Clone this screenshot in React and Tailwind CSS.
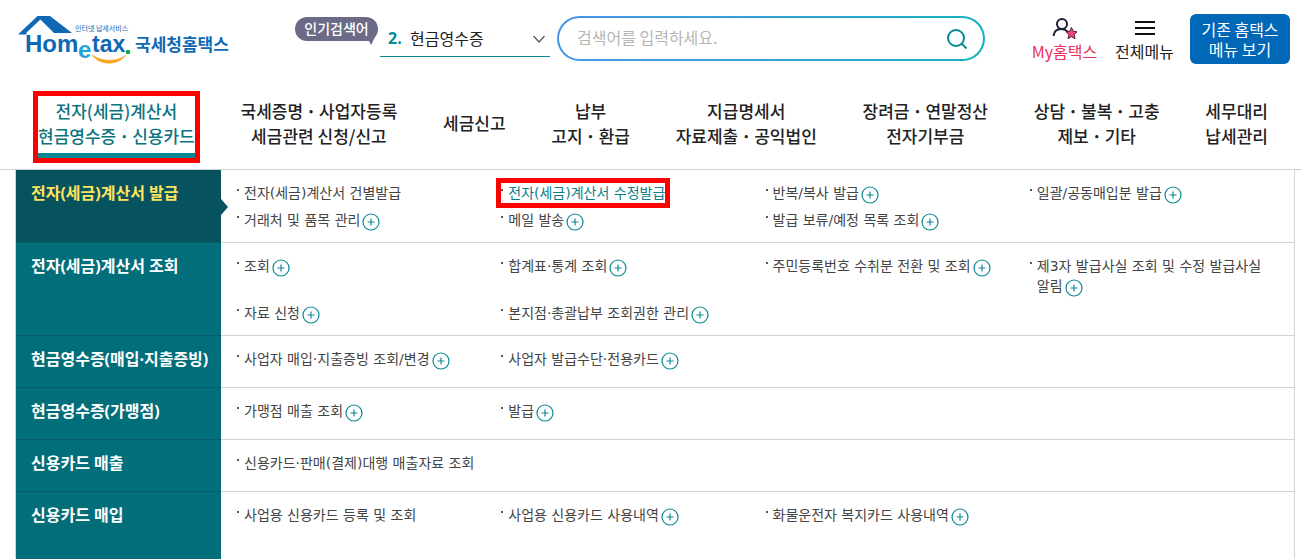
import { useState } from "react"

const topMenus = [
    ["전자(세금)계산서", "현금영수증・신용카드"],
    ["국세증명・사업자등록", "세금관련 신청/신고"],
    ["세금신고"],
    ["납부", "고지・환급"],
    ["지급명세서", "자료제출・공익법인"],
    ["장려금・연말정산", "전자기부금"],
    ["상담・불복・고충", "제보・기타"],
    ["세무대리", "납세관리"],
]

const sections = [
    {
        title: "전자(세금)계산서 발급",
        items: [
            { label: "전자(세금)계산서 건별발급" },
            { label: "전자(세금)계산서 수정발급", marked: true },
            { label: "반복/복사 발급", more: true },
            { label: "일괄/공동매입분 발급", more: true },
            { label: "거래처 및 품목 관리", more: true },
            { label: "메일 발송", more: true },
            { label: "발급 보류/예정 목록 조회", more: true },
        ],
    },
    {
        title: "전자(세금)계산서 조회",
        items: [
            { label: "조회", more: true },
            { label: "합계표·통계 조회", more: true },
            { label: "주민등록번호 수취분 전환 및 조회", more: true },
            { label: "제3자 발급사실 조회 및 수정 발급사실 알림", more: true },
            { label: "자료 신청", more: true },
            { label: "본지점·총괄납부 조회권한 관리", more: true },
        ],
    },
    {
        title: "현금영수증(매입·지출증빙)",
        items: [
            { label: "사업자 매입·지출증빙 조회/변경", more: true },
            { label: "사업자 발급수단·전용카드", more: true },
        ],
    },
    {
        title: "현금영수증(가맹점)",
        items: [
            { label: "가맹점 매출 조회", more: true },
            { label: "발급", more: true },
        ],
    },
    {
        title: "신용카드 매출",
        items: [{ label: "신용카드·판매(결제)대행 매출자료 조회" }],
    },
    {
        title: "신용카드 매입",
        items: [
            { label: "사업용 신용카드 등록 및 조회" },
            { label: "사업용 신용카드 사용내역", more: true },
            { label: "화물운전자 복지카드 사용내역", more: true },
        ],
    },
]

const Logo = () => (
    <svg width="212" height="52" viewBox="0 0 212 52" role="img" aria-label="Hometax 국세청홈택스">
        <path d="M0 20.5 L19.5 2 H32 L54 19 H36 L22.5 5.5 L8.5 18.5 V20.5 Z" fill="#0f68b4" />
        <g fontFamily="'Liberation Sans', Arial, sans-serif" fontWeight="700" fill="#0f68b4">
            <text x="7" y="38" fontSize="24">Hom</text>
            <text x="60" y="44" fontSize="24" fill="#1fa3dc">e</text>
            <text x="74" y="38" fontSize="23">tax</text>
        </g>
        <circle cx="110" cy="38" r="2.3" fill="#16a34a" />
        <path d="M74 41 C82 52 100 52 108 41 C100 48 84 48 74 41 Z" fill="#f5a623" stroke="#f5a623" strokeWidth="0.6" />
        <g fontFamily="'Noto Sans CJK KR', sans-serif" fill="#0f68b4">
            <text x="57" y="17" fontSize="7">인터넷 납세서비스</text>
            <text x="117" y="37" fontSize="17" fontWeight="700">국세청홈택스</text>
        </g>
    </svg>
)

const PlusIcon = () => (
    <svg className="inline-block ml-0.5 -my-1 align-[-2px]" width="18" height="18" viewBox="0 0 18 18" fill="none" stroke="#0b8a94" strokeWidth="1.2">
        <circle cx="9" cy="9" r="8" />
        <path d="M9 5.5 V12.5 M5.5 9 H12.5" />
    </svg>
)

const Header = () => {
    const [keyword, setKeyword] = useState("")

    return (
        <header className="flex items-start h-20 pl-[18px] pr-[11px] pt-3.5">
            <a href="#home" className="shrink-0 w-[210px]">
                <Logo />
            </a>

            <div className="relative shrink-0 ml-[67px] mt-[3px] w-[83px] h-6 rounded-full bg-[#6b6b88] text-white text-sm leading-[22px] font-medium text-center">
                인기검색어
                <svg className="absolute right-0 -bottom-1" width="12" height="14" viewBox="0 0 12 14">
                    <path d="M0 10 L12 0 L5 14 L3 10 Z" fill="#6b6b88" />
                </svg>
            </div>

            <div className="relative flex items-center shrink-0 ml-0.5 mt-1.5 w-[170px] h-[37px] pl-2 border-b border-[#078a93]">
                <label htmlFor="popular" className="w-[22px] font-bold text-[#078a93] font-['Noto_Sans']">2.</label>
                <select id="popular" className="flex-1 appearance-none bg-transparent text-[#222] outline-none">
                    <option>현금영수증</option>
                </select>
                <svg className="absolute right-[5px] top-[15px] pointer-events-none" width="12" height="8" viewBox="0 0 12 8" fill="none" stroke="#555" strokeWidth="1.2">
                    <path d="M0.5 1 L6 7 L11.5 1" />
                </svg>
            </div>

            <form onSubmit={(e) => e.preventDefault()} className="flex-1 ml-[7px] mt-0.5 p-0.5 rounded-full bg-linear-to-r from-[#4796ea] to-[#0eb0bb]">
                <div className="flex items-center h-[41px] pl-[18px] pr-4 rounded-full bg-white">
                    <input
                        type="text"
                        aria-label="검색어"
                        placeholder="검색어를 입력하세요."
                        value={keyword}
                        onChange={(e) => setKeyword(e.target.value)}
                        className="flex-1 min-w-0 pb-1 outline-none placeholder:text-[#b5b5b5]"
                    />
                    <button type="submit" aria-label="검색">
                        <svg width="20" height="20" viewBox="0 0 20 20" fill="none" stroke="#078a93" strokeWidth="2">
                            <circle cx="9" cy="9" r="8" />
                            <path d="M14.5 14.5 L19.5 19.5" />
                        </svg>
                    </button>
                </div>
            </form>

            <button className="flex flex-col items-center shrink-0 ml-[46px] mt-1 w-[67px] leading-5 whitespace-nowrap text-[#e8305a]">
                <svg width="26" height="23" viewBox="0 0 26 23" fill="none">
                    <circle cx="10" cy="6" r="5" stroke="#1b1b3a" strokeWidth="2" />
                    <path d="M1.5 18 C2 13.5 5 11 9 11 C12 11 14 12 15.5 13.5" stroke="#1b1b3a" strokeWidth="2" />
                    <path d="M19.5 9.5 L21.2 13.3 L25 13.8 L22.2 16.6 L23 20.7 L19.5 18.7 L16 20.7 L16.8 16.6 L14 13.8 L17.8 13.3 Z" fill="#f4476b" stroke="#4a2038" strokeWidth="1" />
                </svg>
                My홈택스
            </button>

            <button className="flex flex-col items-center shrink-0 ml-[17px] mt-1 w-[59px] leading-5 whitespace-nowrap text-[#222]">
                <svg width="20" height="23" viewBox="0 0 20 23" stroke="#111" strokeWidth="2">
                    <path d="M0 4 H20 M0 10 H20 M0 16 H20" />
                </svg>
                전체메뉴
            </button>

            <button className="shrink-0 ml-4 w-[100px] h-[50px] rounded-md bg-[#0068b7] text-white leading-5">
                기존 홈택스<br />메뉴 보기
            </button>
        </header>
    )
}

const TopNav = () => (
    <nav className="flex justify-between pt-4 pb-[11px] pl-[38px] pr-[33px] border-b border-[#cfcfcf] text-[17px] leading-[25px] font-medium">
        {topMenus.map((lines, i) => (
            <button
                key={lines[0]}
                className={`flex flex-col items-center justify-center h-[62px] pb-1 border-b-5 whitespace-nowrap ${i === 0 ? "border-[#078a93] text-[#0b7480] outline-5 outline-[#ff0000]" : "border-transparent text-[#222]"}`}
            >
                {lines.map((line) => (
                    <span key={line}>
                        {line.split("・").map((part, n) => (
                            <span key={part}>
                                {n > 0 && <span className="inline-block w-4 text-center font-bold">·</span>}
                                {part}
                            </span>
                        ))}
                    </span>
                ))}
            </button>
        ))}
    </nav>
)

const MenuItem = ({ item }) => (
    <li className="pr-3">
        <a
            href="#menu"
            className={`flex w-fit ${item.marked ? "whitespace-nowrap text-[#0b7f8a] outline-5 outline-[#ff0000]" : "text-[#444]"}`}
        >
            <span className="shrink-0 w-0.5 h-0.5 mt-1.5 mr-[5px] bg-[#555]" />
            <span className="break-keep">
                {item.label}
                {item.more && <PlusIcon />}
            </span>
        </a>
    </li>
)

const App = () => {
    return (
        <div className="flex flex-col min-h-screen bg-white text-base font-['Noto_Sans_CJK_KR',sans-serif]">
            <Header />
            <TopNav />
            <main className="flex flex-col flex-1 ml-[15px] mr-1.5 border-x border-[#d4d4d4]">
                {sections.map((section, i) => (
                    <section key={section.title} className="flex min-h-13 last:flex-1">
                        <h2 className={`relative shrink-0 w-[205px] pl-[15px] pt-[11px] leading-6 font-bold font-['Noto_Sans','Noto_Sans_CJK_KR',sans-serif] whitespace-nowrap border-[#065d68] ${i < sections.length - 1 ? "border-b" : ""} ${i === 0 ? "bg-[#06525e] text-[#ffe45c]" : "bg-[#026e7a] text-white"}`}>
                            {section.title}
                            {i === 0 && (
                                <svg className="absolute left-full top-[29px]" width="7" height="16" viewBox="0 0 7 16">
                                    <path d="M0 0 L7 8 L0 16 Z" fill="#06525e" />
                                </svg>
                            )}
                        </h2>
                        <ul className={`grid grid-cols-4 content-start flex-1 gap-y-[7px] pl-4 pt-[13px] pb-3 text-sm leading-5 font-['DejaVu_Sans','Noto_Sans_CJK_KR',sans-serif] border-[#d4d4d4] ${i < sections.length - 1 ? "border-b" : ""}`}>
                            {section.items.map((item) => (
                                <MenuItem key={item.label} item={item} />
                            ))}
                        </ul>
                    </section>
                ))}
            </main>
        </div>
    )
}

export default App
